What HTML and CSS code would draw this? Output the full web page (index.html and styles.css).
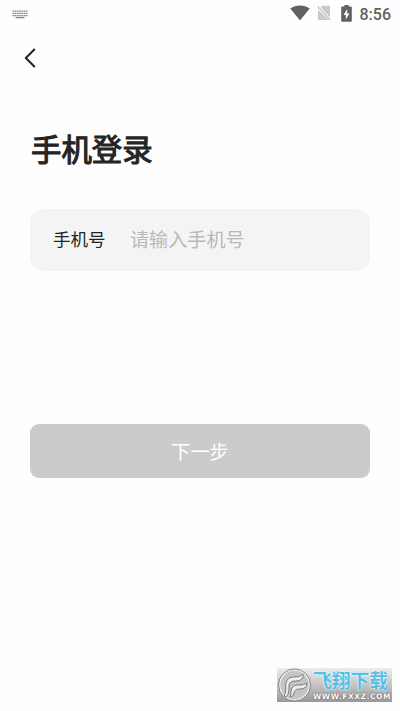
FILE: index.html
```html
<!DOCTYPE html>
<html lang="zh-CN">
<head>
    <meta charset="UTF-8">
    <meta name="viewport" content="width=device-width, initial-scale=1.0">
    <title>手机登录</title>
    <link rel="stylesheet" href="styles.css">
</head>
<body>
    <div class="status-bar">
        <svg class="icon-keyboard" width="16" height="9" viewBox="0 0 16 9" fill="none" stroke="#858585">
            <path d="M0.5 1.2h15M0.5 3.4h15M0.5 5.6h15" stroke-width="1.3" stroke-dasharray="1.7 0.5"></path>
            <path d="M3.5 7.6h9" stroke-width="1.3"></path>
        </svg>
        <div class="status-icons">
            <svg class="icon-wifi" width="20" height="16" viewBox="0 0 20 16">
                <path d="M0.3 3.6C5.8-0.6 14.2-0.6 19.7 3.6L10 15.5z" fill="#616161"></path>
            </svg>
            <svg class="icon-sim" width="14" height="16" viewBox="0 0 14 16">
                <path d="M3.8 2.2L5.2 0.8H13v11.8z" fill="#c9c9c9"></path>
                <path d="M1 4.6V15h10.8z" fill="#c9c9c9"></path>
                <path d="M0.6 1.3l12.8 13.8" stroke="#b8b8b8" stroke-width="1.1"></path>
            </svg>
            <svg class="icon-battery" width="11" height="17" viewBox="0 0 11 17">
                <path d="M3.4 0h4.2v1.6h2.2q1 0 1 1v13.2q0 1-1 1H1.2q-1 0-1-1V2.6q0-1 1-1h2.2z" fill="#616161"></path>
                <path d="M6.2 4L2.5 10h2.3v4.5L8.5 8.5H6.2z" fill="#fff"></path>
            </svg>
            <span class="time">8:56</span>
        </div>
    </div>

    <header class="nav">
        <a class="back" href="#" aria-label="返回">
            <svg width="12" height="20" viewBox="0 0 12 20" fill="none" stroke="#242424" stroke-width="2" stroke-linecap="round" stroke-linejoin="round">
                <path d="M10.3 1.5L1.8 10l8.5 8.5"></path>
            </svg>
        </a>
    </header>

    <main class="login">
        <h1>手机登录</h1>
        <label class="field">
            <span class="field-label">手机号</span>
            <input class="field-input" type="tel" placeholder="请输入手机号">
        </label>
        <button class="btn" type="button">下一步</button>
    </main>

    <div class="watermark">
        <svg class="watermark-logo" width="36" height="34" viewBox="0 0 36 34">
            <circle cx="17.5" cy="17" r="16" fill="#f0f0f0" stroke="#858585" stroke-width="1"></circle>
            <circle cx="17.5" cy="17" r="14.2" fill="#c4c4c4"></circle>
            <g fill="#eee" stroke="#777" stroke-width="1" stroke-linejoin="round">
                <path d="M7 27c3-4 1-8 2-12 1-5 5-6 9-6 4 0 6-1 8-3 1 4-2 7-7 7-4 0-7 1-7 5 0 4 0 8-3 11z"></path>
                <path d="M13 29c2-3 0-6 2-9 2-3 5-3 8-3 3 0 5-1 7-2 0 4-3 6-7 6-4 0-5 1-6 4-1 3-2 4-4 4z"></path>
            </g>
        </svg>
        <div class="watermark-text">
            <span class="watermark-name">飞翔下载</span>
            <span class="watermark-url">WWW.FXXZ.COM</span>
        </div>
    </div>
</body>
</html>
```

FILE: styles.css
```css
:root {
    --text-primary: #242424;
    --text-placeholder: #b9b9b9;
    --field-bg: #f4f4f4;
    --btn-disabled: #cbcbcb;
    --status-color: #616161;
}

* {
    box-sizing: border-box;
}

body {
    margin: 0;
    height: 711px;
    overflow: hidden;
    background-color: #fefefe;
    color: var(--text-primary);
    font-family: 'Noto Sans CJK SC', sans-serif;
}

.status-bar {
    display: flex;
    justify-content: space-between;
    align-items: center;
    height: 28px;
    padding: 0 9px 0 12px;
}

.status-icons {
    display: flex;
    align-items: center;
    height: 26px;
}

.icon-wifi,
.icon-sim,
.icon-battery {
    margin-bottom: 2px;
}

.icon-sim {
    margin-left: 7px;
}

.icon-battery {
    margin-left: 10px;
    margin-right: 8px;
}

.time {
    padding-top: 2px;
    font: 500 16px/26px Roboto, sans-serif;
    color: var(--status-color);
}

.nav {
    display: flex;
    align-items: center;
    height: 60px;
    padding-left: 24px;
}

.back {
    display: flex;
}

.login {
    padding: 37px 30px 0;
}

h1 {
    margin: 0 0 38px 1px;
    font-size: 30.4px;
    line-height: 46px;
    font-weight: 400;
    -webkit-text-stroke: 1.1px var(--text-primary);
}

.field {
    display: flex;
    align-items: center;
    height: 62px;
    padding: 0 23px 3px;
    border-radius: 14px;
    background-color: var(--field-bg);
}

.field-label {
    flex: none;
    width: 77px;
    font-size: 17.5px;
}

.field-input {
    flex: 1;
    min-width: 0;
    padding: 0;
    border: none;
    outline: none;
    background: none;
    font: inherit;
    font-size: 19.1px;
}

.field-input::placeholder {
    color: var(--text-placeholder);
}

.btn {
    display: block;
    width: 100%;
    height: 54px;
    margin-top: 153px;
    padding: 0 0 1px;
    border: none;
    border-radius: 9px;
    background-color: var(--btn-disabled);
    color: #fff;
    font: inherit;
    font-size: 19.1px;
}

/* Site badge over the page corner */
.watermark {
    position: absolute;
    right: 8px;
    bottom: 9px;
    display: flex;
    width: 115px;
    height: 34px;
    background: linear-gradient(#ededed, #999);
    white-space: nowrap;
}

.watermark-logo {
    flex: none;
}

.watermark-text {
    display: flex;
    flex-direction: column;
}

.watermark-name {
    height: 24px;
    font-size: 18.8px;
    line-height: 24px;
    font-weight: 700;
    color: #55bfe6;
    text-shadow: 0 0 1px #fff, 0 0 2px #fff;
}

.watermark-url {
    font: 700 7.5px/9px 'DejaVu Sans', sans-serif;
    letter-spacing: 0.55px;
    color: #fff;
    text-shadow: 0 0 1px #555, 0 0 1px #555;
}
```
